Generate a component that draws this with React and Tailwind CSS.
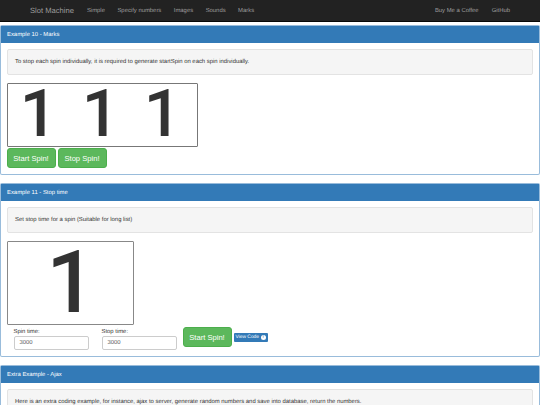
const font = { fontFamily: '"Liberation Sans", Arial, sans-serif' };
const digitFont = { fontFamily: 'Roboto, Arial, sans-serif' };

const navLinks = ['Simple', 'Specify numbers', 'Images', 'Sounds', 'Marks'];

function Panel({ title, note, children }) {
  return (
    <section className="mb-[8px] rounded-[2px] border border-[#337ab7]/50 bg-white">
      <h2 className="flex h-[17px] items-center bg-[#337ab7] px-[6px] pt-[1px] text-[5.9px] font-normal text-white">{title}</h2>
      <div className="pt-[6px] pr-[6px] pb-[6px] pl-[5.5px]">
        <div className="flex h-[26px] items-center rounded-[2px] border border-[#e3e3e3] bg-[#f5f5f5] px-[7.5px] pt-[1px] text-[5.9px] whitespace-nowrap text-[#333]">
          {note}
        </div>
        {children}
      </div>
    </section>
  );
}

function SpinButton({ label }) {
  return (
    <button
      type="button"
      className="h-[20px] w-[49px] rounded-[3px] border border-[#4cae4c] bg-[#5cb85c] pt-[1px] text-[7.6px] font-normal text-white"
    >
      {label}
    </button>
  );
}

function TimeField({ label, className }) {
  return (
    <div className={`flex flex-col ${className}`}>
      <label className="h-[9px] text-[5.9px] leading-[10px] text-[#333]">{label}</label>
      <div className="flex h-[14px] w-[75px] items-center rounded-[2px] border border-[#ccc] bg-white px-[5px] text-[5.9px] text-[#555]">
        3000
      </div>
    </div>
  );
}

export default function App() {
  return (
    <div style={font} className="h-[405px] w-[540px] overflow-hidden bg-white [text-rendering:geometricPrecision]">
      <nav className="flex h-[22px] items-center justify-between border-b border-[#080808] bg-[#222] px-[30px] pt-[1px] text-[5.9px] text-[#9d9d9d]">
        <div className="flex items-center">
          <span className="mr-[13px] text-[7.6px]">Slot Machine</span>
          <div className="flex gap-[12.5px]">
            {navLinks.map((link) => (
              <a key={link}>{link}</a>
            ))}
          </div>
        </div>
        <div className="flex gap-[13px]">
          <a>Buy Me a Coffee</a>
          <a>GitHub</a>
        </div>
      </nav>

      <main className="pt-[3px]">
        <Panel title="Example 10 - Marks" note="To stop each spin individually, it is required to generate startSpin on each spin individually.">
          <div className="mt-[8px] grid h-[64px] w-[191px] grid-cols-3 items-center rounded-[1px] border border-[#777] pr-[3px] text-center text-[66px] leading-[60px] font-medium text-[#333]" style={digitFont}>
            <span>1</span>
            <span>1</span>
            <span>1</span>
          </div>
          <div className="mt-[1px] flex gap-[2px]">
            <SpinButton label="Start Spin!" />
            <SpinButton label="Stop Spin!" />
          </div>
        </Panel>

        <Panel title="Example 11 - Stop time" note="Set stop time for a spin (Suitable for long list)">
          <div className="mt-[8px] flex h-[84px] w-[127px] items-center justify-center rounded-[1px] border border-[#888] pl-[2px] text-[87px] leading-[80px] font-medium text-[#333]" style={digitFont}>
            1
          </div>
          <div className="mt-[2px] flex items-end">
            <TimeField label="Spin time:" className="ml-[7px]" />
            <TimeField label="Stop time:" className="ml-[13px]" />
            <div className="mb-[3px] ml-[6px] flex items-center gap-[2px]">
              <SpinButton label="Start Spin!" />
              <span className="flex h-[9px] items-center gap-[1.5px] rounded-[1px] bg-[#337ab7] px-[2px] text-[4.9px] leading-[9px] text-white">
                <span className="pt-[1.5px]">View Code</span>
                <span className="flex h-[5px] w-[5px] items-center justify-center rounded-full bg-white text-[4px] leading-none font-bold text-[#337ab7]">!</span>
              </span>
            </div>
          </div>
        </Panel>

        <Panel title="Extra Example - Ajax" note="Here is an extra coding example, for instance, ajax to server, generate random numbers and save into database, return the numbers." />
      </main>
    </div>
  );
}
